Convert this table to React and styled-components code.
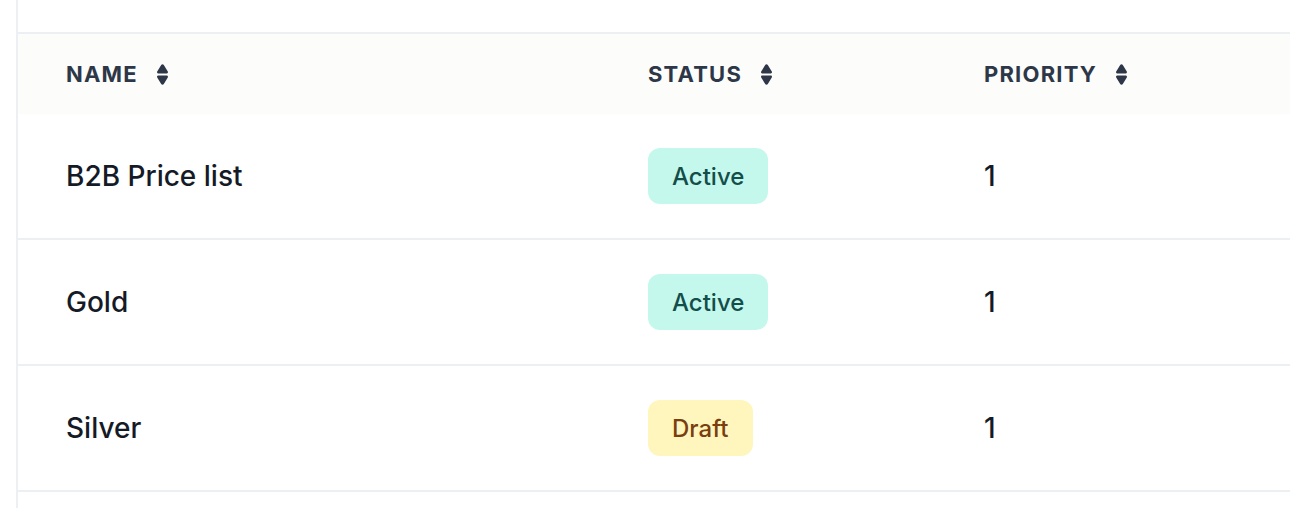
import React from 'react';
import styled, { createGlobalStyle } from 'styled-components';

const GlobalStyle = createGlobalStyle`
  body {
    margin: 0;
    background: #ffffff;
    font-family: Inter, "Noto Sans", sans-serif;
  }
`;

const Page = styled.div`
  padding-left: 16px;
  height: 508px;
  overflow: hidden;
`;

const Panel = styled.div`
  border-left: 2px solid #edf0f3;
  padding-top: 32px;
  min-height: 100%;
`;

const Table = styled.div`
  border-top: 2px solid #edf0f3;
`;

const Row = styled.div`
  display: grid;
  grid-template-columns: 582px 336px 1fr;
  align-items: center;
  padding-left: 48px;
  height: ${(p) => (p.$head ? '80px' : '124px')};
  background: ${(p) => (p.$head ? '#fcfcfb' : '#ffffff')};
  border-bottom: ${(p) => (p.$head ? 'none' : '2px solid #edf0f3')};
`;

const HeadCell = styled.div`
  display: flex;
  align-items: center;
  gap: 18px;
  font-size: 22px;
  font-weight: 700;
  letter-spacing: 1.2px;
  color: #2d3748;
  text-transform: uppercase;
`;

const Cell = styled.div`
  font-size: 28px;
  font-weight: 500;
  color: #151a27;
`;

const Badge = styled.span`
  display: inline-flex;
  align-items: center;
  height: 56px;
  padding: 0 24px;
  border-radius: 12px;
  font-size: 24px;
  font-weight: 500;
  background: ${(p) => (p.$tone === 'draft' ? '#fef6bd' : '#c5f8ec')};
  color: ${(p) => (p.$tone === 'draft' ? '#7a3e0f' : '#134e4a')};
`;

const SortIcon = () => (
  <svg width="13" height="23" viewBox="0 0 13 23" fill="#2d3748">
    <path d="M6.5 1.2c.5 0 1 .3 1.3.8l4 6.6c.5.8-.1 1.8-1 1.8H2.2c-.9 0-1.5-1-1-1.8l4-6.6c.3-.5.8-.8 1.3-.8z" />
    <path d="M6.5 21.8c.5 0 1-.3 1.3-.8l4-6.6c.5-.8-.1-1.8-1-1.8H2.2c-.9 0-1.5 1-1 1.8l4 6.6c.3.5.8.8 1.3.8z" />
  </svg>
);

const rows = [
  { name: 'B2B Price list', status: 'Active', priority: 1 },
  { name: 'Gold', status: 'Active', priority: 1 },
  { name: 'Silver', status: 'Draft', priority: 1 },
];

const columns = ['Name', 'Status', 'Priority'];

export default function App() {
  return (
    <>
      <GlobalStyle />
      <Page>
        <Panel>
          <Table>
            <Row $head>
              {columns.map((col) => (
                <HeadCell key={col}>
                  {col}
                  <SortIcon />
                </HeadCell>
              ))}
            </Row>
            {rows.map((row) => (
              <Row key={row.name}>
                <Cell>{row.name}</Cell>
                <div>
                  <Badge $tone={row.status === 'Draft' ? 'draft' : 'active'}>
                    {row.status}
                  </Badge>
                </div>
                <Cell>{row.priority}</Cell>
              </Row>
            ))}
          </Table>
        </Panel>
      </Page>
    </>
  );
}
